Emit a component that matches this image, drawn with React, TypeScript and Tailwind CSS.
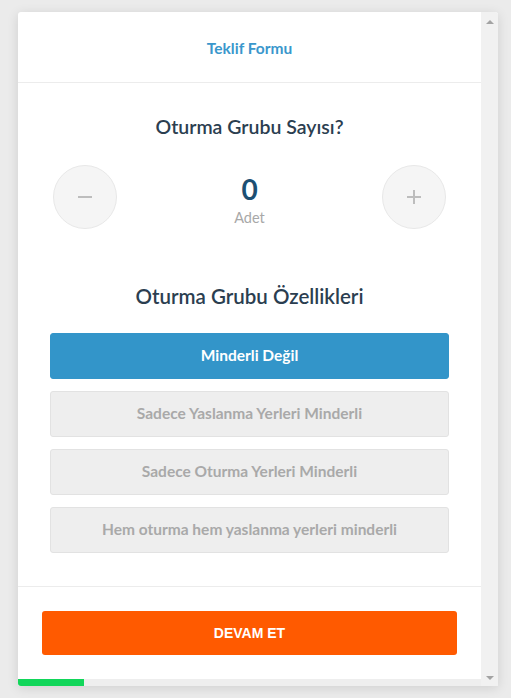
import { useState } from "react";

const secenekler = [
  "Minderli Değil",
  "Sadece Yaslanma Yerleri Minderli",
  "Sadece Oturma Yerleri Minderli",
  "Hem oturma hem yaslanma yerleri minderli",
];

export default function App() {
  const [adet, setAdet] = useState(0);
  const [secili, setSecili] = useState(0);

  return (
    <div className="min-h-screen bg-[#ebebeb] pt-[12px] pl-[18px] [font-family:Lato,'Noto_Sans',sans-serif]">
      <div className="flex w-[480px] h-[674px] bg-white rounded-t-[3px] shadow-[0_2px_12px_rgba(0,0,0,0.12)] overflow-hidden">
        {/* İçerik */}
        <div className="flex flex-col w-[463px]">
          <div className="h-[71px] flex items-center justify-center pt-[3px] border-b border-[#ececec]">
            <h2 className="text-[15.5px] font-bold text-[#3a97cc]">Teklif Formu</h2>
          </div>

          <div className="flex-1 flex flex-col px-[32px] pt-[32px] pb-[32px] border-b border-[#ececec]">
            <h3 className="text-center text-[19.5px] leading-[24px] font-semibold text-[#2b3e50]">
              Oturma Grubu Sayısı?
            </h3>

            <div className="mt-[26px] flex items-center justify-between px-[3px]">
              <button
                onClick={() => setAdet(Math.max(0, adet - 1))}
                className="w-[64px] h-[64px] rounded-full bg-[#f5f5f5] border border-[#e8e8e8] flex items-center justify-center"
              >
                <span className="block w-[14px] h-[2px] bg-[#bdbdbd]" />
              </button>
              <div className="flex flex-col items-center pt-[6px]">
                <span className="text-[28px] leading-[32px] font-bold text-[#1d4f73]">{adet}</span>
                <span className="mt-[3px] text-[14.5px] leading-[20px] text-[#a8a8a8]">Adet</span>
              </div>
              <button
                onClick={() => setAdet(adet + 1)}
                className="w-[64px] h-[64px] rounded-full bg-[#f5f5f5] border border-[#e8e8e8] flex items-center justify-center"
              >
                <span className="relative block w-[14px] h-[14px]">
                  <span className="absolute left-0 top-[6px] w-[14px] h-[2px] bg-[#bdbdbd]" />
                  <span className="absolute top-0 left-[6px] w-[2px] h-[14px] bg-[#bdbdbd]" />
                </span>
              </button>
            </div>

            <h3 className="mt-[55px] text-center text-[20.5px] leading-[24px] font-semibold text-[#2b3e50]">
              Oturma Grubu Özellikleri
            </h3>

            <div className="mt-[25px] flex flex-col gap-[12px]">
              {secenekler.map((s, i) => (
                <button
                  key={s}
                  onClick={() => setSecili(i)}
                  className={
                    i === secili
                      ? "h-[46px] rounded-[3px] bg-[#3395c9] border border-[#3395c9] text-white text-[15.5px] font-bold"
                      : "h-[46px] rounded-[3px] bg-[#eeeeee] border border-[#e2e2e2] text-[#a9a9a9] text-[15.5px] font-bold"
                  }
                >
                  {s}
                </button>
              ))}
            </div>
          </div>

          <div className="px-[24px] pt-[24px] pb-[24px]">
            <button className="w-full h-[44px] rounded-[3px] bg-[#ff5a00] text-white text-[14px] font-bold [font-family:'Liberation_Sans',Arial,sans-serif]">
              DEVAM ET
            </button>
          </div>

          <div className="h-[7px] bg-[#eeeeee]">
            <div className="h-full w-[66px] bg-[#12d65a] rounded-bl-[3px]" />
          </div>
        </div>

        {/* Kaydırma çubuğu */}
        <div className="w-[17px] bg-[#f1f1f1] flex flex-col items-center justify-between pt-[8px] pb-[6px]">
          <span className="block w-0 h-0 border-l-[4px] border-r-[4px] border-b-[4px] border-l-transparent border-r-transparent border-b-[#a3a3a3]" />
          <span className="block w-0 h-0 border-l-[4px] border-r-[4px] border-t-[4px] border-l-transparent border-r-transparent border-t-[#a3a3a3]" />
        </div>
      </div>
    </div>
  );
}
